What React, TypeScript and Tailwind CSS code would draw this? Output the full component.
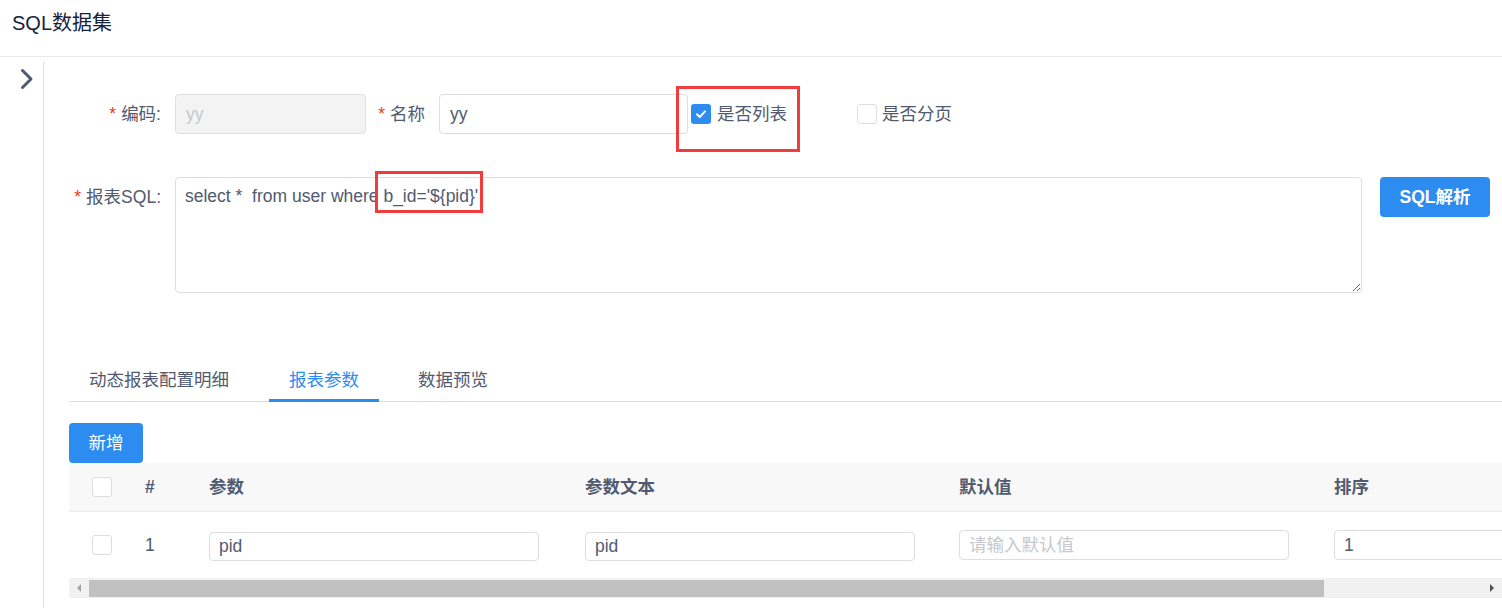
import React from 'react';

const FONT = { fontFamily: '"Liberation Sans", "Noto Sans CJK SC", sans-serif' };

function Star() {
  return <span className="mr-[5px] text-[#ed4014]">*</span>;
}

function Checkbox({ checked }: { checked?: boolean }) {
  if (checked) {
    return (
      <span className="flex h-[20px] w-[20px] items-center justify-center rounded-[3px] bg-[#2d8cf0]">
        <svg width="12" height="10" viewBox="0 0 12 10" fill="none">
          <path d="M2 5.2 4.8 8 10 2.4" stroke="#fff" strokeWidth="2" strokeLinecap="round" strokeLinejoin="round" />
        </svg>
      </span>
    );
  }
  return <span className="block h-[20px] w-[20px] rounded-[3px] border border-[#dcdee2] bg-white" />;
}

type Col = { title: string; w: string };

const columns: Col[] = [
  { title: '参数', w: 'w-[376px]' },
  { title: '参数文本', w: 'w-[374px]' },
  { title: '默认值', w: 'w-[375px]' },
  { title: '排序', w: 'w-[375px]' },
];

export default function App() {
  return (
    <div className="h-[608px] w-full overflow-hidden bg-white text-[17.5px] text-[#515a6e]" style={FONT}>
      {/* Header */}
      <div className="h-[57px] border-b border-[#e8eaec] px-[12px] pt-[9px]">
        <h1 className="text-[20px] leading-[28px] text-[#17233d]">SQL数据集</h1>
      </div>

      <div className="flex h-[551px]">
        {/* Collapsed side strip */}
        <div className="mt-[5px] w-[44px] shrink-0 border-r border-[#dcdee2]">
          <svg className="ml-[20px] mt-[6px]" width="14" height="22" viewBox="0 0 14 22" fill="none">
            <path d="M2.5 2.5 11 11l-8.5 8.5" stroke="#515a6e" strokeWidth="3" strokeLinecap="round" strokeLinejoin="round" />
          </svg>
        </div>

        {/* Main */}
        <div className="min-w-0 flex-1 pl-[25px] pt-[37px]">
          {/* Row 1 */}
          <div className="flex h-[40px] items-center">
            <label className="w-[106px] shrink-0 pr-[14px] text-right">
              <Star />编码:
            </label>
            <div className="flex h-[40px] w-[191px] shrink-0 items-center rounded-[4px] border border-[#dcdee2] bg-[#f3f3f3] px-[10px] text-[#c5c8ce]">
              yy
            </div>
            <label className="w-[73px] shrink-0 pr-[14px] text-right">
              <Star />名称
            </label>
            <div className="flex h-[40px] w-[249px] shrink-0 items-center rounded-[4px] border border-[#dcdee2] px-[10px]">
              yy
            </div>
            <div className="relative ml-[3px] flex items-center gap-[6px]">
              <Checkbox checked />
              <span>是否列表</span>
              <span className="pointer-events-none absolute left-[-15px] top-[-15px] h-[66px] w-[124px] border-[3px] border-[#f03c3c]" />
            </div>
            <div className="ml-[70px] flex items-center gap-[5px]">
              <Checkbox />
              <span>是否分页</span>
            </div>
          </div>

          {/* Row 2 */}
          <div className="mr-[12px] mt-[43px] flex items-start">
            <label className="w-[106px] shrink-0 pr-[14px] text-right leading-[40px]">
              <Star />报表SQL:
            </label>
            <div className="relative min-w-0 flex-1">
              <textarea
                readOnly
                value={"select *  from user where b_id='${pid}'"}
                className="block h-[116px] w-full rounded-[4px] border border-[#dcdee2] px-[9px] py-[5px] leading-[26px] text-[#515a6e] outline-none"
              />
              <span className="pointer-events-none absolute left-[200px] top-[-6px] h-[42px] w-[108px] border-[3px] border-[#f03c3c]" />
            </div>
            <button className="ml-[18px] h-[40px] w-[110px] shrink-0 rounded-[4px] bg-[#2d8cf0] font-bold text-white">
              SQL解析
            </button>
          </div>

          {/* Tabs */}
          <div className="mt-[67px] flex h-[42px] items-stretch border-b border-[#dcdee2]">
            <div className="flex items-center px-[20px]">动态报表配置明细</div>
            <div className="relative ml-[20px] flex items-center px-[20px] text-[#2d8cf0]">
              报表参数
              <span className="absolute bottom-[-1px] left-0 right-0 h-[3px] bg-[#2d8cf0]" />
            </div>
            <div className="ml-[20px] flex items-center px-[19px]">数据预览</div>
          </div>

          <button className="mt-[21px] h-[40px] w-[74px] rounded-[4px] bg-[#2d8cf0] text-white">新增</button>

          {/* Table */}
          <div className="overflow-hidden">
            <div className="w-[1700px]">
              <div className="flex h-[49px] items-center border-b border-[#e8eaec] bg-[#f8f8f9] font-bold">
                <div className="flex w-[64px] justify-center pl-[1px]">
                  <Checkbox />
                </div>
                <div className="w-[64px] pl-[12px]">#</div>
                {columns.map((c) => (
                  <div key={c.title} className={`${c.w} pl-[12px]`}>
                    {c.title}
                  </div>
                ))}
              </div>
              <div className="flex h-[66px] items-center">
                <div className="flex w-[64px] justify-center pl-[1px]">
                  <Checkbox />
                </div>
                <div className="w-[64px] pl-[12px]">1</div>
                <div className="w-[376px] pl-[12px]">
                  <div className="mt-[2px] flex h-[29px] w-[330px] items-center rounded-[4px] border border-[#dcdee2] px-[9px]">pid</div>
                </div>
                <div className="w-[374px] pl-[12px]">
                  <div className="mt-[2px] flex h-[29px] w-[330px] items-center rounded-[4px] border border-[#dcdee2] px-[9px]">pid</div>
                </div>
                <div className="w-[375px] pl-[12px]">
                  <div className="flex h-[30px] w-[330px] items-center rounded-[4px] border border-[#dcdee2] px-[9px] text-[#c5c8ce]">
                    请输入默认值
                  </div>
                </div>
                <div className="w-[375px] pl-[12px]">
                  <div className="flex h-[30px] w-[330px] items-center rounded-[4px] border border-[#dcdee2] px-[9px]">1</div>
                </div>
              </div>
            </div>

            {/* Horizontal scrollbar */}
            <div className="flex h-[20px] items-center bg-[#f1f1f1]">
              <div className="flex w-[20px] shrink-0 items-center justify-center">
                <svg width="6" height="8" viewBox="0 0 6 8">
                  <path d="M5 0v8L1 4z" fill="#a3a3a3" />
                </svg>
              </div>
              <div className="h-[17px] w-[1235px] shrink-0 bg-[#c1c1c1]" />
              <div className="flex-1" />
              <div className="flex w-[20px] shrink-0 items-center justify-center">
                <svg width="6" height="8" viewBox="0 0 6 8">
                  <path d="M1 0v8l4-4z" fill="#505050" />
                </svg>
              </div>
            </div>
          </div>
        </div>
      </div>
    </div>
  );
}
